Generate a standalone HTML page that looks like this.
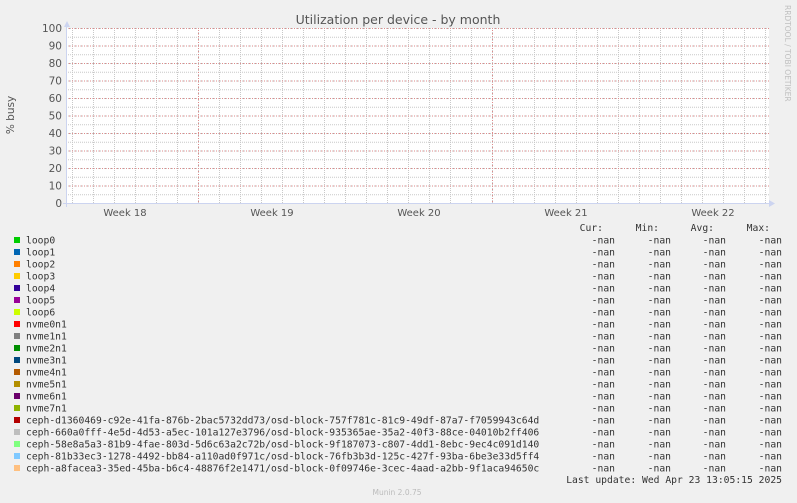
<!DOCTYPE html>
<html><head><meta charset="utf-8"><style>
html,body{margin:0;padding:0;background:#f0f0f0;}
svg{display:block;}
text{font-family:"DejaVu Sans",sans-serif;}
.m, .m text, text.m{font-family:"DejaVu Sans Mono",monospace;font-size:9.7px;fill:#333;}
</style></head><body>
<svg width="797" height="503" xmlns="http://www.w3.org/2000/svg">
<defs>
<pattern id="pv" x="72" y="0" width="21" height="2" patternUnits="userSpaceOnUse"><rect x="0" y="0" width="1" height="1" fill="#c8c8c8"/></pattern>
<pattern id="ph" x="0" y="28" width="2" height="8.75" patternUnits="userSpaceOnUse"><rect x="0" y="0" width="1" height="1" fill="#c8c8c8"/></pattern>
<pattern id="pr" x="0" y="28" width="3" height="17.5" patternUnits="userSpaceOnUse"><rect x="0" y="0" width="1" height="1" fill="#e08a8a"/></pattern>
<pattern id="prv" x="0" y="0" width="2" height="3" patternUnits="userSpaceOnUse"><rect x="0" y="0" width="1" height="1" fill="#e08a8a"/></pattern>
</defs>
<rect x="67" y="28" width="702" height="175" fill="#fff"/>
<rect x="67" y="28" width="702" height="175" fill="url(#ph)"/>
<rect x="67" y="28" width="702" height="175" fill="url(#pv)"/>
<rect x="67" y="28" width="702" height="175" fill="url(#pr)"/>
<rect x="198" y="28" width="1" height="175" fill="url(#prv)"/>
<rect x="345" y="28" width="1" height="175" fill="url(#prv)"/>
<rect x="492" y="28" width="1" height="175" fill="url(#prv)"/>
<rect x="639" y="28" width="1" height="175" fill="url(#prv)"/>
<line x1="66.5" y1="24" x2="66.5" y2="207" stroke="#ccd4f0"/>
<line x1="63" y1="203.5" x2="770" y2="203.5" stroke="#ccd4f0"/>
<path d="M64 27 L67 21 L70 27Z" fill="#ccd4f0"/>
<path d="M769 200 L775 203.5 L769 207Z" fill="#ccd4f0"/>
<text x="398" y="24" text-anchor="middle" font-size="12.5" fill="#555">Utilization per device - by month</text>
<g font-size="10.5" fill="#555" text-anchor="end">
<text x="62" y="32">100</text><text x="62" y="49.5">90</text><text x="62" y="67">80</text><text x="62" y="84.5">70</text><text x="62" y="102">60</text><text x="62" y="119.5">50</text><text x="62" y="137">40</text><text x="62" y="154.5">30</text><text x="62" y="172">20</text><text x="62" y="189.5">10</text><text x="62" y="207">0</text>
</g>
<text transform="translate(14,115) rotate(-90)" text-anchor="middle" font-size="10.5" fill="#555">% busy</text>
<g font-size="10" fill="#555" text-anchor="middle">
<text x="125" y="216">Week 18</text><text x="272" y="216">Week 19</text><text x="419" y="216">Week 20</text><text x="566" y="216">Week 21</text><text x="713" y="216">Week 22</text>
</g>
<text transform="translate(785,5) rotate(90)" font-size="7.5" fill="#c0c0c0">RRDTOOL / TOBI OETIKER</text>
<g class="m" text-anchor="end">
<text x="603" y="231">Cur:</text><text x="659" y="231">Min:</text><text x="714" y="231">Avg:</text><text x="770" y="231">Max:</text>
</g>
<text class="m" x="782" y="483" text-anchor="end">Last update: Wed Apr 23 13:05:15 2025</text>
<text x="397" y="495" text-anchor="middle" font-size="7.5" fill="#bbb">Munin 2.0.75</text>
<g class="m">
<rect x="14" y="237" width="6" height="6" fill="#00CC00"/><text x="26" y="243.5">loop0</text>
<rect x="14" y="249" width="6" height="6" fill="#0066B3"/><text x="26" y="255.5">loop1</text>
<rect x="14" y="261" width="6" height="6" fill="#FF8000"/><text x="26" y="267.5">loop2</text>
<rect x="14" y="273" width="6" height="6" fill="#FFCC00"/><text x="26" y="279.5">loop3</text>
<rect x="14" y="285" width="6" height="6" fill="#330099"/><text x="26" y="291.5">loop4</text>
<rect x="14" y="297" width="6" height="6" fill="#990099"/><text x="26" y="303.5">loop5</text>
<rect x="14" y="309" width="6" height="6" fill="#CCFF00"/><text x="26" y="315.5">loop6</text>
<rect x="14" y="321" width="6" height="6" fill="#FF0000"/><text x="26" y="327.5">nvme0n1</text>
<rect x="14" y="333" width="6" height="6" fill="#808080"/><text x="26" y="339.5">nvme1n1</text>
<rect x="14" y="345" width="6" height="6" fill="#008F00"/><text x="26" y="351.5">nvme2n1</text>
<rect x="14" y="357" width="6" height="6" fill="#00487D"/><text x="26" y="363.5">nvme3n1</text>
<rect x="14" y="369" width="6" height="6" fill="#B35A00"/><text x="26" y="375.5">nvme4n1</text>
<rect x="14" y="381" width="6" height="6" fill="#B38F00"/><text x="26" y="387.5">nvme5n1</text>
<rect x="14" y="393" width="6" height="6" fill="#6B006B"/><text x="26" y="399.5">nvme6n1</text>
<rect x="14" y="405" width="6" height="6" fill="#8FB300"/><text x="26" y="411.5">nvme7n1</text>
<rect x="14" y="417" width="6" height="6" fill="#B30000"/><text x="26" y="423.5">ceph-d1360469-c92e-41fa-876b-2bac5732dd73/osd-block-757f781c-81c9-49df-87a7-f7059943c64d</text>
<rect x="14" y="429" width="6" height="6" fill="#BEBEBE"/><text x="26" y="435.5">ceph-660a0fff-4e5d-4d53-a5ec-101a127e3796/osd-block-935365ae-35a2-40f3-88ce-04010b2ff406</text>
<rect x="14" y="441" width="6" height="6" fill="#80FF80"/><text x="26" y="447.5">ceph-58e8a5a3-81b9-4fae-803d-5d6c63a2c72b/osd-block-9f187073-c807-4dd1-8ebc-9ec4c091d140</text>
<rect x="14" y="453" width="6" height="6" fill="#80C9FF"/><text x="26" y="459.5">ceph-81b33ec3-1278-4492-bb84-a110ad0f971c/osd-block-76fb3b3d-125c-427f-93ba-6be3e33d5ff4</text>
<rect x="14" y="465" width="6" height="6" fill="#FFC080"/><text x="26" y="471.5">ceph-a8facea3-35ed-45ba-b6c4-48876f2e1471/osd-block-0f09746e-3cec-4aad-a2bb-9f1aca94650c</text>
</g>
<g class="m" text-anchor="end">
<text x="615" y="243.5">-nan</text><text x="671" y="243.5">-nan</text><text x="726" y="243.5">-nan</text><text x="782" y="243.5">-nan</text>
<text x="615" y="255.5">-nan</text><text x="671" y="255.5">-nan</text><text x="726" y="255.5">-nan</text><text x="782" y="255.5">-nan</text>
<text x="615" y="267.5">-nan</text><text x="671" y="267.5">-nan</text><text x="726" y="267.5">-nan</text><text x="782" y="267.5">-nan</text>
<text x="615" y="279.5">-nan</text><text x="671" y="279.5">-nan</text><text x="726" y="279.5">-nan</text><text x="782" y="279.5">-nan</text>
<text x="615" y="291.5">-nan</text><text x="671" y="291.5">-nan</text><text x="726" y="291.5">-nan</text><text x="782" y="291.5">-nan</text>
<text x="615" y="303.5">-nan</text><text x="671" y="303.5">-nan</text><text x="726" y="303.5">-nan</text><text x="782" y="303.5">-nan</text>
<text x="615" y="315.5">-nan</text><text x="671" y="315.5">-nan</text><text x="726" y="315.5">-nan</text><text x="782" y="315.5">-nan</text>
<text x="615" y="327.5">-nan</text><text x="671" y="327.5">-nan</text><text x="726" y="327.5">-nan</text><text x="782" y="327.5">-nan</text>
<text x="615" y="339.5">-nan</text><text x="671" y="339.5">-nan</text><text x="726" y="339.5">-nan</text><text x="782" y="339.5">-nan</text>
<text x="615" y="351.5">-nan</text><text x="671" y="351.5">-nan</text><text x="726" y="351.5">-nan</text><text x="782" y="351.5">-nan</text>
<text x="615" y="363.5">-nan</text><text x="671" y="363.5">-nan</text><text x="726" y="363.5">-nan</text><text x="782" y="363.5">-nan</text>
<text x="615" y="375.5">-nan</text><text x="671" y="375.5">-nan</text><text x="726" y="375.5">-nan</text><text x="782" y="375.5">-nan</text>
<text x="615" y="387.5">-nan</text><text x="671" y="387.5">-nan</text><text x="726" y="387.5">-nan</text><text x="782" y="387.5">-nan</text>
<text x="615" y="399.5">-nan</text><text x="671" y="399.5">-nan</text><text x="726" y="399.5">-nan</text><text x="782" y="399.5">-nan</text>
<text x="615" y="411.5">-nan</text><text x="671" y="411.5">-nan</text><text x="726" y="411.5">-nan</text><text x="782" y="411.5">-nan</text>
<text x="615" y="423.5">-nan</text><text x="671" y="423.5">-nan</text><text x="726" y="423.5">-nan</text><text x="782" y="423.5">-nan</text>
<text x="615" y="435.5">-nan</text><text x="671" y="435.5">-nan</text><text x="726" y="435.5">-nan</text><text x="782" y="435.5">-nan</text>
<text x="615" y="447.5">-nan</text><text x="671" y="447.5">-nan</text><text x="726" y="447.5">-nan</text><text x="782" y="447.5">-nan</text>
<text x="615" y="459.5">-nan</text><text x="671" y="459.5">-nan</text><text x="726" y="459.5">-nan</text><text x="782" y="459.5">-nan</text>
<text x="615" y="471.5">-nan</text><text x="671" y="471.5">-nan</text><text x="726" y="471.5">-nan</text><text x="782" y="471.5">-nan</text>
</g>
</svg>
</body></html>
